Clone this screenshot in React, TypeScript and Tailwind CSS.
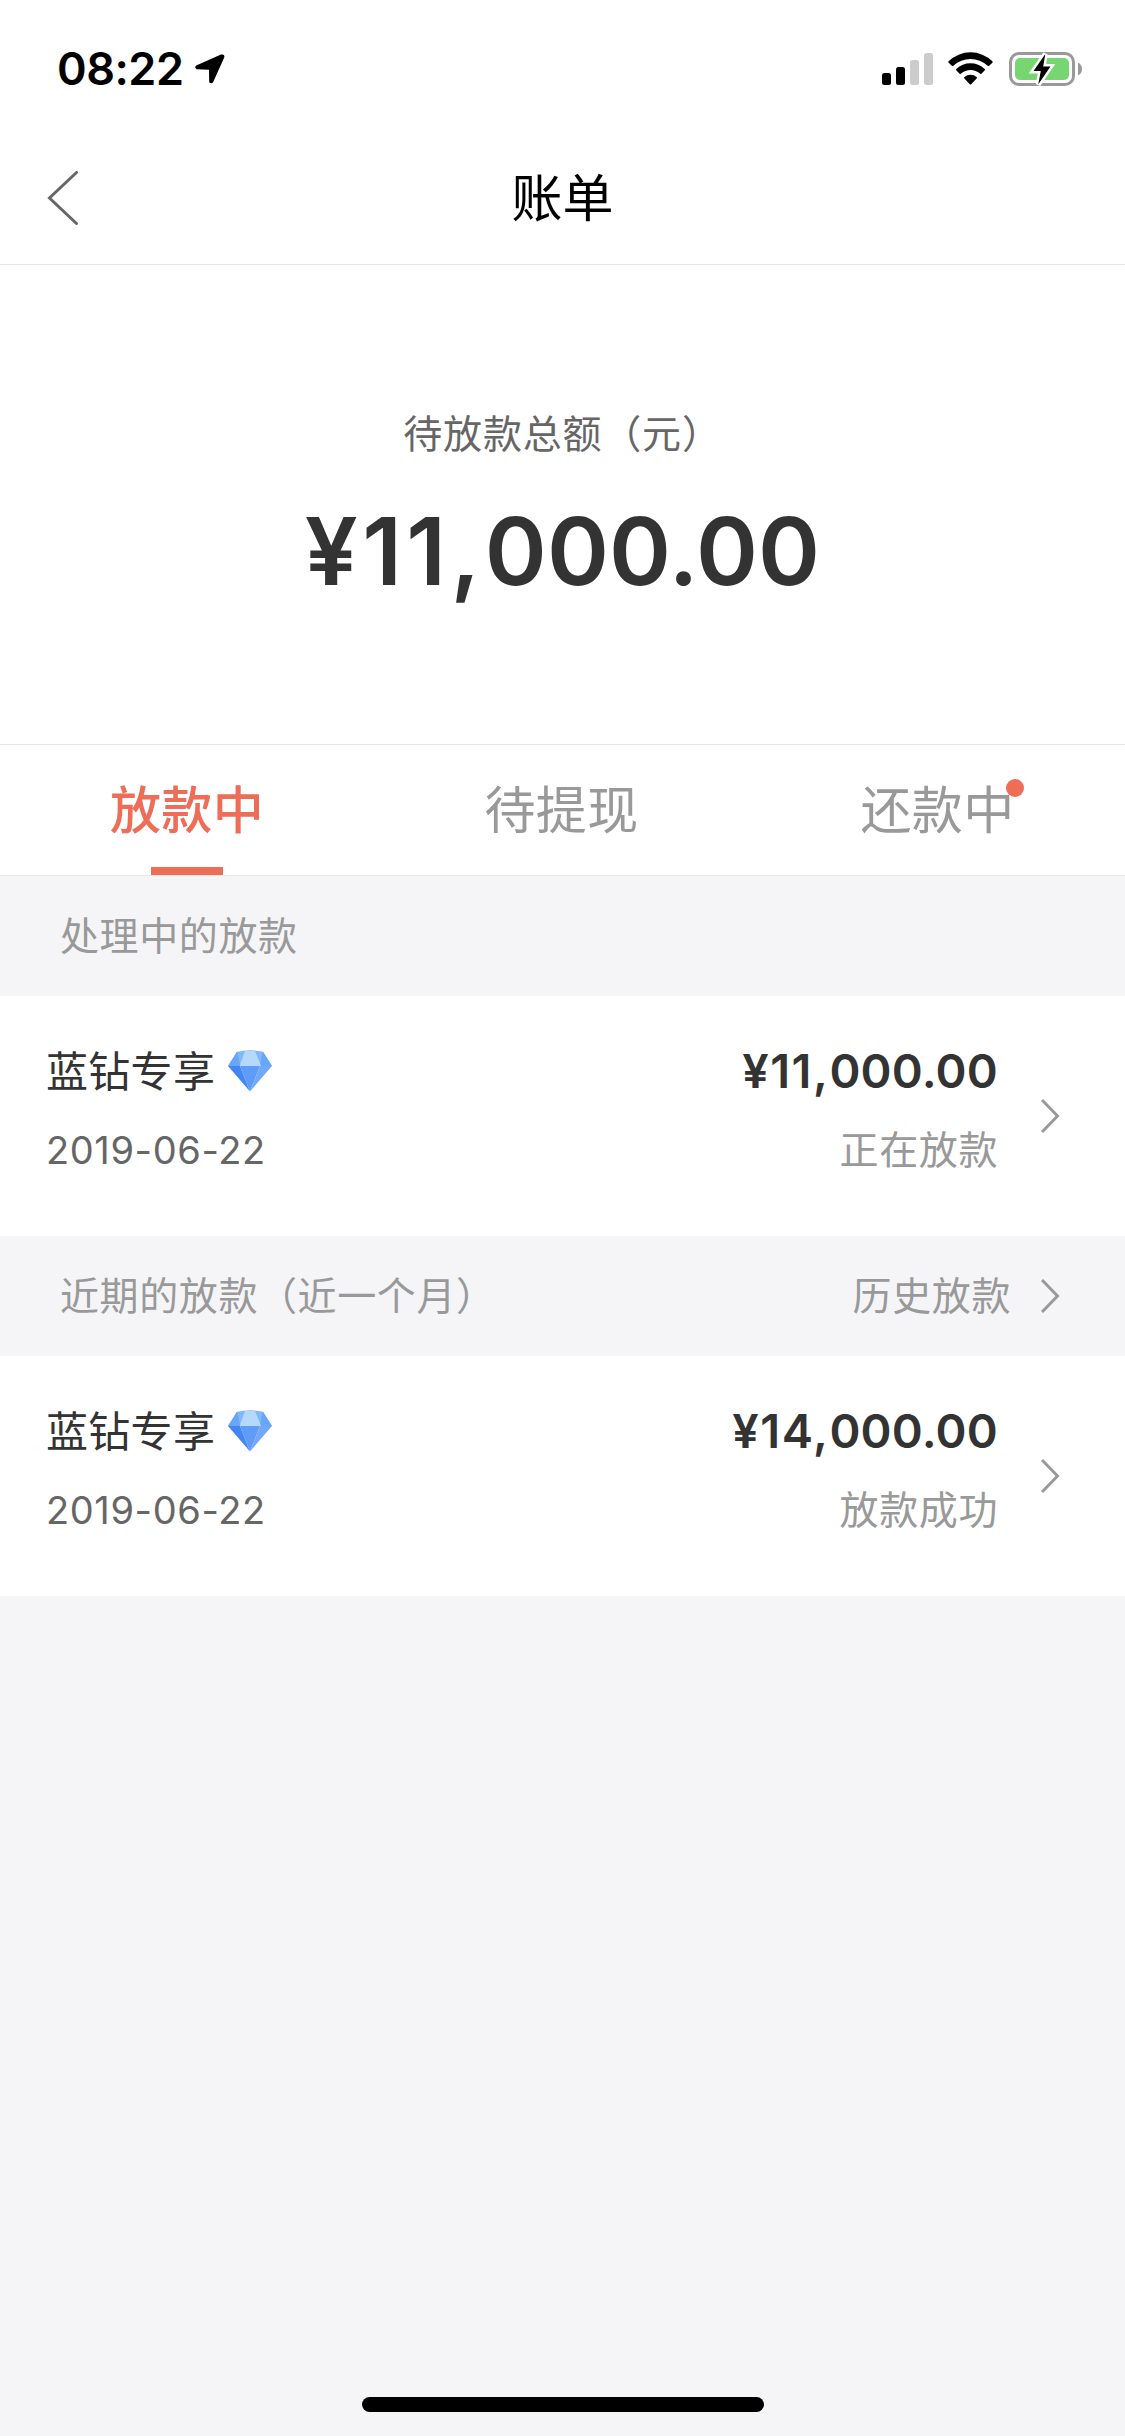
import React from "react";

const cjk = "font-['Noto_Sans_CJK_SC',sans-serif]";
const num = "font-['Inter',sans-serif]";

function StatusBar() {
  return (
    <div className="flex h-[132px] items-start justify-between pl-[57px] pr-[43px]">
      <div className="flex items-start">
        <span className="mt-[41px] w-[138px] font-['Inter',sans-serif] text-[45px] leading-[56px] font-semibold tracking-[-0.5px] whitespace-nowrap text-black">
          08:22
        </span>
        <svg className="mt-[54px] h-[30px] w-[30px]" viewBox="0 0 30 30">
          <path
            d="M1.2 11.4 L26 0.6 Q30.2 -0.4 29.2 3.6 L18.2 28 Q16.6 30.6 14.2 28.2 L14 15.8 L1.6 15.2 Q-1 13.2 1.2 11.4 Z"
            fill="#000"
          />
        </svg>
      </div>
      <div className="mt-[52px] flex items-start">
        <svg className="mr-[15px] h-[34px] w-[51px]" viewBox="0 0 51 34">
          <rect x="0" y="21" width="9" height="12" rx="2.5" fill="#000" />
          <rect x="14" y="15" width="9" height="18" rx="2.5" fill="#000" />
          <rect x="28" y="8" width="9" height="25" rx="2.5" fill="#ccc" />
          <rect x="42" y="1" width="9" height="32" rx="2.5" fill="#ccc" />
        </svg>
        <svg className="mr-[16px] h-[34px] w-[45px]" viewBox="0 0 45 34">
          <path d="M0.6 9.2 A31.5 31.5 0 0 1 44.4 9.2 Q45 10 44.3 10.8 L41.2 13.8 Q40.4 14.4 39.6 13.7 A25 25 0 0 0 5.4 13.7 Q4.6 14.4 3.8 13.8 L0.7 10.8 Q0 10 0.6 9.2 Z" fill="#000" />
          <path d="M8.3 17 A20.5 20.5 0 0 1 36.7 17 Q37.4 17.8 36.6 18.6 L33.4 21.7 Q32.7 22.3 31.9 21.6 A14 14 0 0 0 13.1 21.6 Q12.3 22.3 11.6 21.7 L8.4 18.6 Q7.6 17.8 8.3 17 Z" fill="#000" />
          <path d="M16.4 25 A9.6 9.6 0 0 1 28.6 25 Q29.4 25.8 28.6 26.6 L23.2 32.2 Q22.5 32.9 21.8 32.2 L16.4 26.6 Q15.6 25.8 16.4 25 Z" fill="#000" />
        </svg>
        <svg className="h-[34px] w-[73px]" viewBox="0 0 73 34">
          <rect x="1.5" y="1.5" width="63" height="31" rx="8.5" fill="none" stroke="#999" strokeWidth="3" />
          <rect x="6" y="6" width="54" height="22" rx="5" fill="#77d572" />
          <path d="M69 10.5 Q73 12.5 73 17 Q73 21.5 69 23.5 Z" fill="#999" />
          <path d="M36.3 2 L24.5 19 L31.8 19 L29.2 32.5 L41.5 14.6 L34.2 14.6 Z" fill="#fff" stroke="#fff" strokeWidth="5" />
          <path d="M36.3 2 L24.5 19 L31.8 19 L29.2 32.5 L41.5 14.6 L34.2 14.6 Z" fill="#000" />
        </svg>
      </div>
    </div>
  );
}

function Header() {
  return (
    <div className="grid h-[133px] grid-cols-3 items-center border-b border-[#e6e6e6] bg-white">
      <svg className="ml-[47px] h-[54px] w-[31px]" viewBox="0 0 31 54">
        <path d="M29.5 1.5 L2.5 27 L29.5 52.5" fill="none" stroke="#666" strokeWidth="3" strokeLinecap="round" />
      </svg>
      <h1 className={`${cjk} pb-[7px] text-center text-[51px] leading-[70px] font-normal text-black`}>账单</h1>
    </div>
  );
}

function Chevron() {
  return (
    <svg className="h-[34px] w-[19px]" viewBox="0 0 19 34">
      <path d="M1 1 L16.5 17 L1 33" fill="none" stroke="#999" strokeWidth="3" />
    </svg>
  );
}

function Diamond() {
  return (
    <svg className="h-[42px] w-[44px]" viewBox="0 0 44 42">
      <path d="M9 1.8 Q22 -1.2 35 1.8 L44 16 L0 16 Z" fill="#7fb8fb" />
      <path d="M9 1.8 L12.5 16 L0 16 Z" fill="#68a6f9" />
      <path d="M35 1.8 L31.5 16 L44 16 Z" fill="#68a6f9" />
      <path d="M17 1 L27 1 L33 16 L11.5 16 Z" fill="#b5d8fc" />
      <path d="M0 16 L12 16 L22 41.5 Z" fill="#4286f5" />
      <path d="M12 16 L32 16 L22 41.5 Z" fill="#5f9bf8" />
      <path d="M32 16 L44 16 L22 41.5 Z" fill="#71a8f9" />
    </svg>
  );
}

function SectionTitle({ title, link }: { title: string; link?: string }) {
  return (
    <div className="flex h-[120px] items-center justify-between bg-[#f5f5f8] pr-[65px] pl-[60px]">
      <span className={`${cjk} pb-[6px] text-[39px] leading-[60px] tracking-[0.6px] text-[#999]`}>{title}</span>
      {link && (
        <div className="flex items-center gap-[30px]">
          <span className={`${cjk} pb-[6px] text-[39px] leading-[60px] tracking-[0.6px] text-[#999]`}>{link}</span>
          <Chevron />
        </div>
      )}
    </div>
  );
}

function LoanRow({ amount, status }: { amount: string; status: string }) {
  const [thousands, rest] = amount.split(",");
  return (
    <div className="flex h-[240px] items-start bg-white pr-[65px] pl-[46px]">
      <div className="flex-1 pt-[44px]">
        <div className="flex h-[62px] items-center">
          <span className={`${cjk} w-[182px] pb-[5px] text-[42px] leading-[62px] tracking-[0.3px] whitespace-nowrap text-[#333]`}>
            蓝钻专享
          </span>
          <Diamond />
        </div>
        <div className={`${num} mt-[18px] text-[38px] leading-[60px] tracking-[0.6px] text-[#666]`}>2019-06-22</div>
      </div>
      <div className="flex flex-col items-end pt-[44px]">
        <span className={`${num} text-[47px] leading-[62px] font-semibold tracking-[0.2px] text-[#333]`}>
          <span className="tracking-[1.5px]">{thousands},</span>
          {rest}
        </span>
        <span className={`${cjk} mt-[15px] text-[39px] leading-[60px] tracking-[0.6px] text-[#999]`}>{status}</span>
      </div>
      <div className="mt-[103px] ml-[43px]">
        <Chevron />
      </div>
    </div>
  );
}

function Tabs() {
  return (
    <div className="grid h-[132px] grid-cols-3 border-y border-[#e6e6e6] bg-white">
      <div className="flex flex-col items-center justify-between pr-px">
        <span className={`${cjk} mt-[24px] text-[51px] leading-[76px] font-medium tracking-[0.3px] text-[#ed6d56]`}>放款中</span>
        <span className="h-[8px] w-[72px] bg-[#ed6d56]" />
      </div>
      <div className="flex justify-center pr-[2px]">
        <span className={`${cjk} mt-[24px] text-[51px] leading-[76px] tracking-[0.3px] text-[#999]`}>待提现</span>
      </div>
      <div className="flex justify-center">
        <span className={`${cjk} relative mt-[24px] h-[76px] text-[51px] leading-[76px] tracking-[0.3px] text-[#999]`}>
          还款中
          <span className="absolute top-[10px] right-[-10px] h-[18px] w-[18px] rounded-full bg-[#ed6d56]" />
        </span>
      </div>
    </div>
  );
}

export default function App() {
  return (
    <div className="flex h-[2436px] w-[1125px] flex-col bg-[#f5f5f8]">
      <div className="bg-white">
        <StatusBar />
        <Header />
      </div>
      <div className="flex h-[479px] flex-col items-center bg-white pt-[136px]">
        <span className={`${cjk} text-[39px] leading-[60px] tracking-[0.8px] text-[#666]`}>待放款总额（元）</span>
        <span className={`${num} mt-[30px] text-[94px] leading-[120px] font-semibold tracking-[0.1px] text-[#333]`}>
          <span className="tracking-[4.4px]">¥11,</span>
          000.00
        </span>
      </div>
      <Tabs />
      <SectionTitle title="处理中的放款" />
      <LoanRow amount="¥11,000.00" status="正在放款" />
      <SectionTitle title="近期的放款（近一个月）" link="历史放款" />
      <LoanRow amount="¥14,000.00" status="放款成功" />
      <div className="mt-auto mb-[24px] h-[15px] w-[402px] self-center rounded-full bg-black" />
    </div>
  );
}
